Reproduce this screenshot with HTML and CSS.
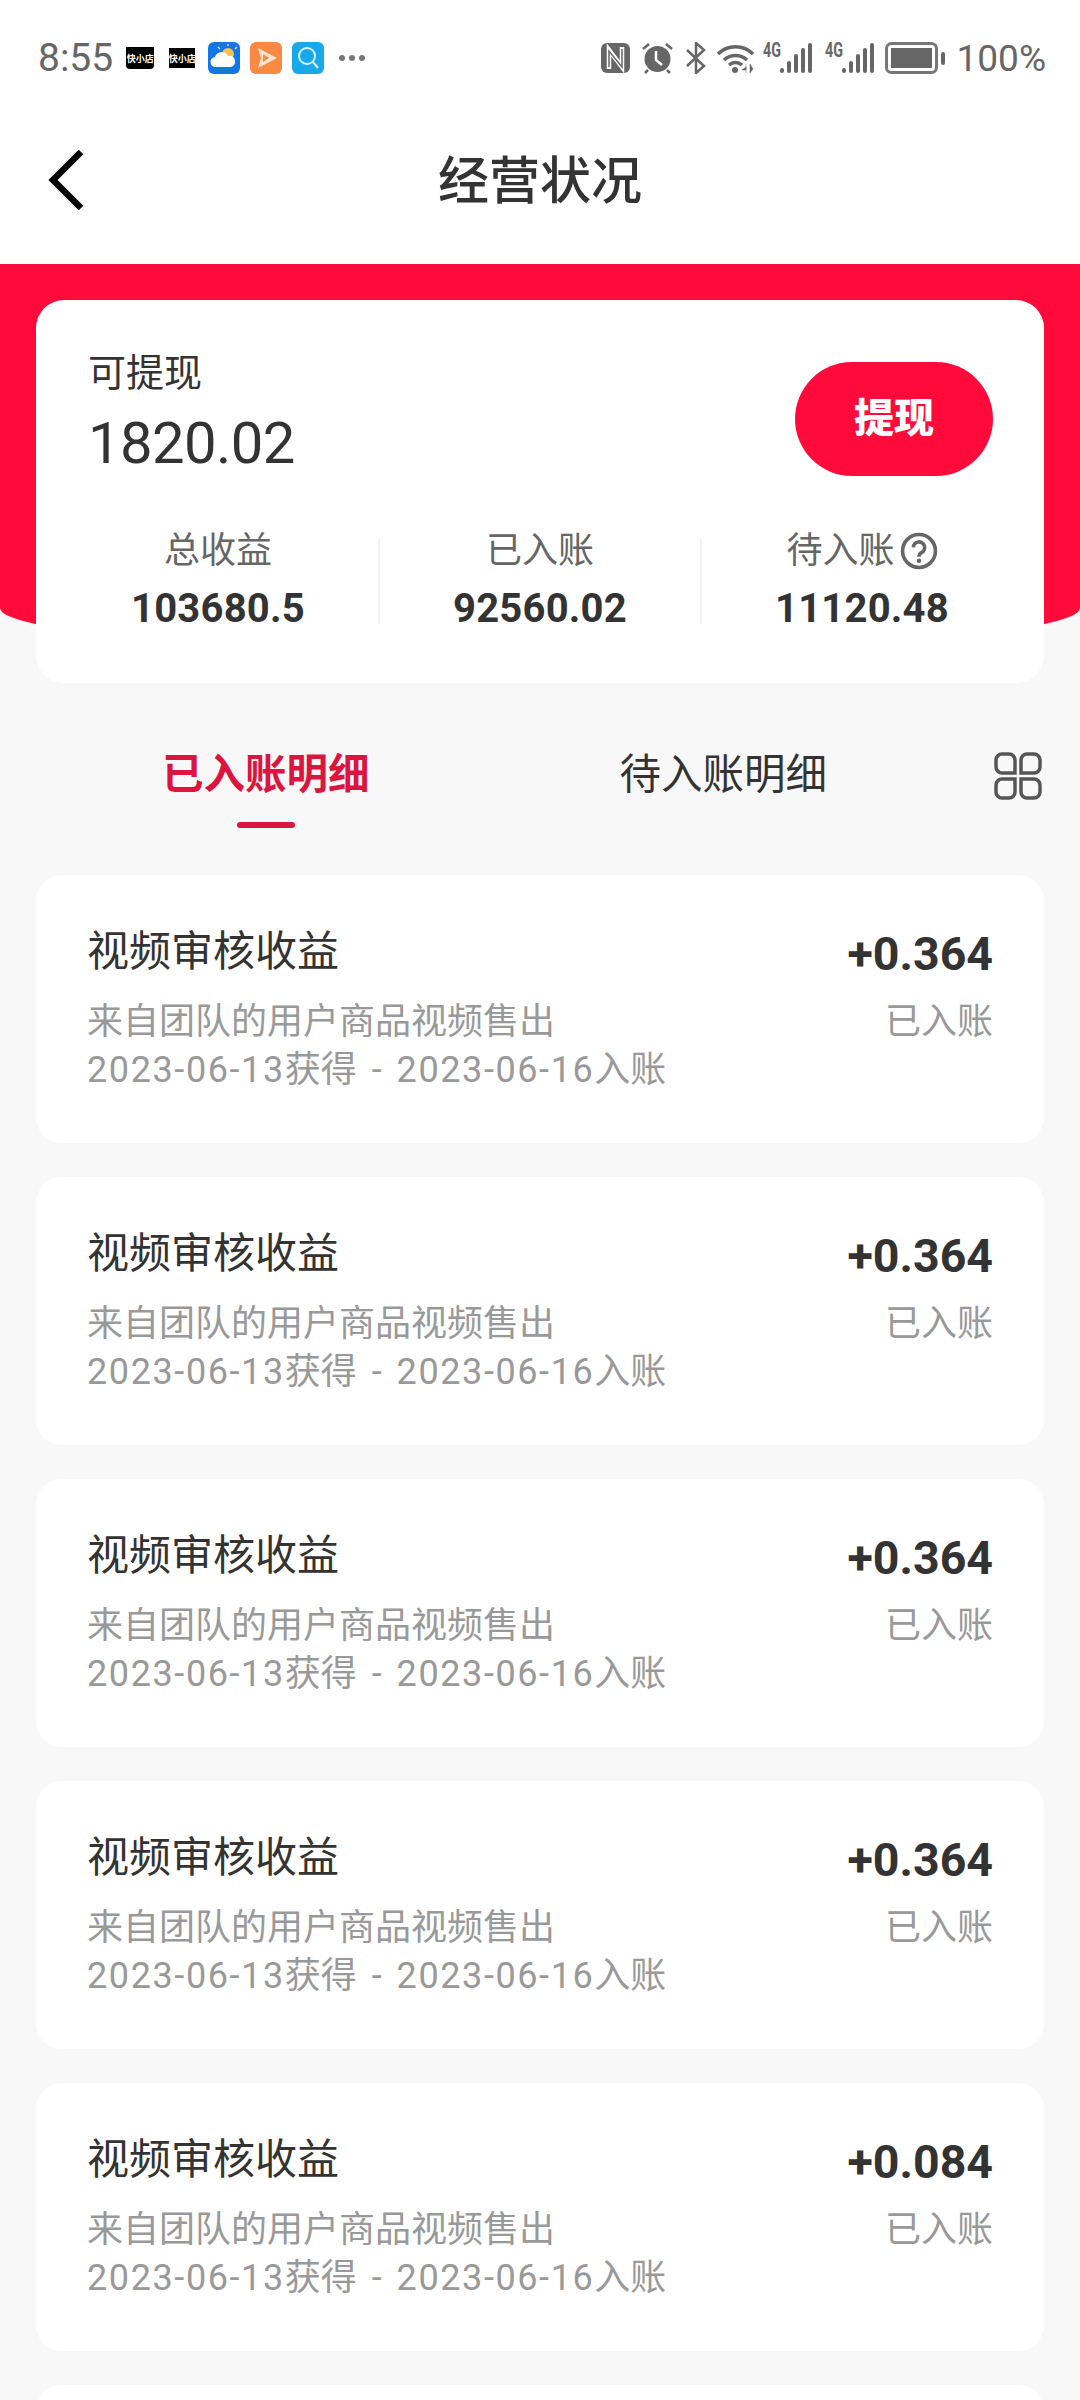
FILE: index.html
```html
<!DOCTYPE html>
<html lang="zh-CN">
<head>
  <meta charset="UTF-8">
  <meta name="viewport" content="width=device-width, initial-scale=1.0">
  <title>经营状况</title>
  <link rel="stylesheet" href="styles.css">
</head>
<body>
  <div class="top">
    <div class="status">
      <div class="status-left">
        <span class="time">8:55</span>
        <span class="app-black first">快小店</span>
        <span class="app-black second">快小店</span>
        <svg class="app" width="32" height="32" viewBox="0 0 32 32">
          <rect width="32" height="32" rx="6" fill="#1376e6"/>
          <circle cx="20" cy="12" r="6" fill="#f2c14e"/>
          <path d="M20 4v-2M27 7l2-2M12 7l-2-2" stroke="#cfe4fa" stroke-width="1.5"/>
          <path d="M8 25a5 5 0 0 1-1-10 7 7 0 0 1 13-1 5.500 5.500 0 0 1 3 11z" fill="#fff"/>
        </svg>
        <svg class="app" width="32" height="32" viewBox="0 0 32 32">
          <rect width="32" height="32" rx="6" fill="#f98a44"/>
          <path d="M8 6l19 10-19 10 3-10z" fill="#fde3cf"/>
          <path d="M13 12l6 4-6 4z" fill="#f98a44"/>
        </svg>
        <svg class="app" width="32" height="32" viewBox="0 0 32 32">
          <rect width="32" height="32" rx="6" fill="#17a9ea"/>
          <circle cx="15" cy="14" r="8" fill="none" stroke="#d9f4ff" stroke-width="2"/>
          <path d="M21 20l5 6" stroke="#d9f4ff" stroke-width="2"/>
        </svg>
        <span class="more"><i></i><i></i><i></i></span>
      </div>
      <div class="status-right">
        <svg width="29" height="30" viewBox="0 0 29 30">
          <rect width="29" height="30" rx="6" fill="#666"/>
          <path d="M8 26V7l13 17V4" fill="none" stroke="#fff" stroke-width="4.500"/>
          <path d="M8 24V8l13 16V6" fill="none" stroke="#666" stroke-width="1.500"/>
        </svg>
        <svg width="33" height="32" viewBox="0 0 33 32">
          <circle cx="16.500" cy="17" r="13" fill="#666"/>
          <path d="M2 7l6-5M31 7l-6-5M7 28l-3 3M26 28l3 3" stroke="#666" stroke-width="2.500"/>
          <path d="M15 9v9l6 5" fill="none" stroke="#fff" stroke-width="2.500"/>
        </svg>
        <svg width="21" height="32" viewBox="0 0 21 32">
          <path d="M2 8l17 16-8 7V1l8 7L2 24" fill="none" stroke="#666" stroke-width="2.500"/>
        </svg>
        <svg width="37" height="30" viewBox="0 0 37 30">
          <path d="M1 11a25 25 0 0 1 35 0M7 17a17 17 0 0 1 23 0M12 22a10 10 0 0 1 13 0" fill="none" stroke="#666" stroke-width="3.500"/>
          <circle cx="18" cy="27" r="3" fill="#666"/>
          <path d="M29 24l-4 3h4zM29 21v9M33 21v9l3-4z" fill="#666" stroke="#666" stroke-width="0.500"/>
        </svg>
        <svg class="signal" width="49" height="44" viewBox="0 -6 49 44">
          <text x="0" y="15" class="net" textLength="18" lengthAdjust="spacingAndGlyphs">4G</text>
          <rect x="17" y="26" width="4" height="5" rx="2" fill="#666"/>
          <rect x="24" y="19" width="4" height="12" rx="2" fill="#666"/>
          <rect x="31" y="12" width="4" height="19" rx="2" fill="#666"/>
          <rect x="38" y="6" width="4" height="25" rx="2" fill="#666"/>
          <rect x="45" y="1" width="4" height="30" rx="2" fill="#666"/>
        </svg>
        <svg width="51" height="44" viewBox="0 -6 51 44">
          <text x="2" y="15" class="net" textLength="18" lengthAdjust="spacingAndGlyphs">4G</text>
          <rect x="19" y="26" width="4" height="5" rx="2" fill="#666"/>
          <rect x="26" y="19" width="4" height="12" rx="2" fill="#666"/>
          <rect x="33" y="12" width="4" height="19" rx="2" fill="#666"/>
          <rect x="40" y="6" width="4" height="25" rx="2" fill="#666"/>
          <rect x="47" y="1" width="4" height="30" rx="2" fill="#666"/>
        </svg>
        <svg width="60" height="32" viewBox="0 0 60 32">
          <rect x="1.500" y="1.500" width="50" height="29" rx="5" fill="none" stroke="#777" stroke-width="3"/>
          <rect x="6" y="6" width="41" height="20" fill="#666"/>
          <rect x="56" y="10" width="4" height="13" rx="2" fill="#666"/>
        </svg>
        <span class="battery">100%</span>
      </div>
    </div>
    <div class="nav">
      <svg class="back" width="36" height="60" viewBox="0 0 36 60">
        <path d="M33 2L5 30l28 28" fill="none" stroke="#000" stroke-width="6.500"/>
      </svg>
      <h1 class="nav-title">经营状况</h1>
    </div>
  </div>

  <div class="hero">
    <div class="summary">
      <div class="balance">
        <div>
          <div class="balance-label">可提现</div>
          <div class="balance-value">1820.02</div>
        </div>
        <button class="withdraw">提现</button>
      </div>
      <div class="stats">
        <div class="stat">
          <div class="stat-label">总收益</div>
          <div class="stat-value">103680.5</div>
        </div>
        <div class="stat">
          <div class="stat-label">已入账</div>
          <div class="stat-value">92560.02</div>
        </div>
        <div class="stat">
          <div class="stat-label">待入账
            <svg class="help" width="38" height="38" viewBox="0 0 37 37">
              <circle cx="18.500" cy="18.500" r="16" fill="none" stroke="#666" stroke-width="3.500"/>
              <path d="M13 15a5.500 5.500 0 1 1 8 5c-2 1-2.500 2-2.500 4" fill="none" stroke="#666" stroke-width="3.500"/>
              <circle cx="18.500" cy="28" r="2.200" fill="#666"/>
            </svg>
          </div>
          <div class="stat-value">11120.48</div>
        </div>
      </div>
    </div>
  </div>

  <div class="tabs">
    <div class="tab active">
      <span>已入账明细</span>
      <i class="tab-line"></i>
    </div>
    <div class="tab other">
      <span>待入账明细</span>
    </div>
    <svg class="tab-grid" width="48" height="48" viewBox="0 0 48 48">
      <g fill="none" stroke="#555" stroke-width="3.500">
        <path d="M21 21H8a6 6 0 0 1-6-6V8a6 6 0 0 1 6-6h7a6 6 0 0 1 6 6z"/>
        <path d="M27 21h13a6 6 0 0 0 6-6V8a6 6 0 0 0-6-6h-7a6 6 0 0 0-6 6z"/>
        <path d="M21 27H8a6 6 0 0 0-6 6v7a6 6 0 0 0 6 6h7a6 6 0 0 0 6-6z"/>
        <path d="M27 27h13a6 6 0 0 1 6 6v7a6 6 0 0 1-6 6h-7a6 6 0 0 1-6-6z"/>
      </g>
    </svg>
  </div>

  <div class="list">
    <div class="item">
      <div>
        <div class="item-title">视频审核收益</div>
        <div class="item-sub">来自团队的用户商品视频售出</div>
        <div class="item-sub item-date"><span class="date">2023-06-13</span>获得 - <span class="date">2023-06-16</span>入账</div>
      </div>
      <div class="item-right">
        <div class="amount">+0.364</div>
        <div class="item-sub">已入账</div>
      </div>
    </div>
    <div class="item">
      <div>
        <div class="item-title">视频审核收益</div>
        <div class="item-sub">来自团队的用户商品视频售出</div>
        <div class="item-sub item-date"><span class="date">2023-06-13</span>获得 - <span class="date">2023-06-16</span>入账</div>
      </div>
      <div class="item-right">
        <div class="amount">+0.364</div>
        <div class="item-sub">已入账</div>
      </div>
    </div>
    <div class="item">
      <div>
        <div class="item-title">视频审核收益</div>
        <div class="item-sub">来自团队的用户商品视频售出</div>
        <div class="item-sub item-date"><span class="date">2023-06-13</span>获得 - <span class="date">2023-06-16</span>入账</div>
      </div>
      <div class="item-right">
        <div class="amount">+0.364</div>
        <div class="item-sub">已入账</div>
      </div>
    </div>
    <div class="item">
      <div>
        <div class="item-title">视频审核收益</div>
        <div class="item-sub">来自团队的用户商品视频售出</div>
        <div class="item-sub item-date"><span class="date">2023-06-13</span>获得 - <span class="date">2023-06-16</span>入账</div>
      </div>
      <div class="item-right">
        <div class="amount">+0.364</div>
        <div class="item-sub">已入账</div>
      </div>
    </div>
    <div class="item">
      <div>
        <div class="item-title">视频审核收益</div>
        <div class="item-sub">来自团队的用户商品视频售出</div>
        <div class="item-sub item-date"><span class="date">2023-06-13</span>获得 - <span class="date">2023-06-16</span>入账</div>
      </div>
      <div class="item-right">
        <div class="amount">+0.084</div>
        <div class="item-sub">已入账</div>
      </div>
    </div>
    <div class="item"></div>
  </div>
</body>
</html>
```

FILE: styles.css
```css
* {
  box-sizing: border-box;
}
html, body {
  margin: 0;
  height: 2400px;
  overflow: hidden;
}
body {
  background-color: #f8f8f8;
  font-family: Roboto, "Noto Sans CJK SC", sans-serif;
  color: #333;
}
.top {
  background-color: #fff;
  height: 264px;
}
.status {
  height: 116px;
  padding: 0 34px 0 38px;
  display: flex;
  justify-content: space-between;
  align-items: center;
  color: #666;
}
.status-left, .status-right {
  display: flex;
  align-items: center;
}
.status-right {
  gap: 11px;
}
.time {
  font-size: 39px;
  line-height: 44px;
}
.app-black {
  background-color: #000;
  color: #fff;
  font-size: 9px;
  font-weight: bold;
  white-space: nowrap;
  display: flex;
  align-items: center;
  justify-content: center;
}
.app-black.first {
  width: 28px;
  height: 22px;
  margin-left: 13px;
  border-radius: 0 0 4px 4px;
}
.app-black.second {
  width: 26px;
  height: 20px;
  margin-left: 15px;
}
.app {
  margin-left: 10px;
}
.app-black.second + .app {
  margin-left: 13px;
}
.more {
  display: flex;
  gap: 4px;
  margin-left: 15px;
}
.more i {
  width: 6px;
  height: 6px;
  border-radius: 50%;
  background-color: #777;
}
.signal {
  margin-left: -2px;
}
.net {
  font-family: Roboto, sans-serif;
  font-size: 20px;
  font-weight: bold;
  fill: #666;
}
.battery {
  font-size: 37px;
  margin-left: 1px;
}
.nav {
  height: 148px;
  padding: 0 48px 18px;
  display: grid;
  grid-template-columns: 1fr auto 1fr;
  align-items: center;
}
.nav-title {
  margin: 0;
  font-size: 51px;
  font-weight: 500;
  line-height: 60px;
  padding-top: 2px;
}
.back {
  margin-bottom: 2px;
}
.hero {
  height: 389px;
  padding: 36px 36px 0;
  background-color: #fe0a3b;
  border-radius: 0 0 540px 540px / 0 0 45px 45px;
}
.summary {
  height: 383px;
  background-color: #fff;
  border-radius: 28px;
  padding: 50px 22px 0;
}
.balance {
  display: flex;
  justify-content: space-between;
  padding: 0 29px 0 30px;
  height: 189px;
}
.balance-label {
  font-size: 38px;
  line-height: 54px;
  margin-top: -4px;
}
.balance-value {
  font-size: 58px;
  line-height: 68px;
  letter-spacing: -0.6px;
  margin-top: 9px;
}
.withdraw {
  width: 198px;
  height: 114px;
  margin-top: 12px;
  padding: 0 0 8px;
  border: none;
  border-radius: 57px;
  background-color: #fe0a3b;
  color: #fff;
  font-family: inherit;
  font-size: 40px;
  font-weight: 900;
}
.stats {
  display: flex;
}
.stat {
  flex: 1;
  text-align: center;
  height: 85px;
  border-left: 2px solid #f2f2f2;
}
.stat:first-child {
  border-left: none;
}
.stat-label {
  font-size: 36px;
  line-height: 44px;
  color: #666;
  margin-top: -10px;
  display: flex;
  justify-content: center;
  align-items: center;
  gap: 5px;
}
.help {
  flex: none;
}
.stat-value {
  font-size: 40px;
  font-weight: bold;
  line-height: 48px;
  margin-top: 12px;
  letter-spacing: 0.2px;
}
.tabs {
  display: flex;
  align-items: flex-start;
  margin-top: 30px;
  padding-top: 64px;
  height: 192px;
  padding-left: 162px;
}
.tab {
  display: flex;
  flex-direction: column;
  align-items: center;
  font-size: 41.5px;
  line-height: 56px;
}
.tab.active {
  color: #dc1440;
  font-weight: bold;
}
.tab.other {
  margin-left: 250px;
}
.tab-line {
  width: 58px;
  height: 6px;
  margin-top: 19px;
  border-radius: 3px;
  background-color: #dc1440;
}
.tab-grid {
  margin-left: 167px;
  margin-top: 5px;
}
.list {
  padding: 0 36px;
  display: flex;
  flex-direction: column;
  gap: 34px;
}
.item {
  height: 268px;
  flex: none;
  background-color: #fff;
  border-radius: 26px;
  padding: 52px 51px 0 51px;
  display: flex;
  justify-content: space-between;
}
.item-title {
  font-size: 42px;
  line-height: 50px;
  margin-bottom: 21px;
}
.item-sub {
  font-size: 36px;
  line-height: 48px;
  color: #999;
}
.item-date {
  word-spacing: 6px;
}
.date {
  letter-spacing: 1.6px;
}
.item-right {
  text-align: right;
}
.amount {
  font-size: 46.5px;
  font-weight: bold;
  line-height: 50px;
  margin-top: 2px;
  margin-bottom: 19px;
}
```
